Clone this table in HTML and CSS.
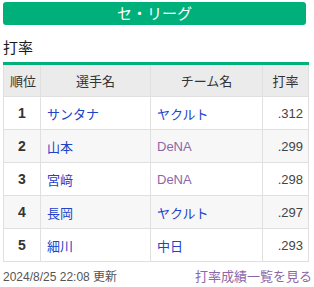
FILE: index.html
```html
<!DOCTYPE html>
<html lang="ja">
<head>
<meta charset="utf-8">
<link rel="stylesheet" href="styles.css">
</head>
<body>
<div class="wrap">
  <div class="league">セ・リーグ</div>
  <h2 class="title">打率</h2>
  <table class="rank">
    <colgroup>
      <col class="w-rank"><col class="w-name"><col class="w-team"><col class="w-avg">
    </colgroup>
    <thead>
      <tr><th>順位</th><th>選手名</th><th>チーム名</th><th>打率</th></tr>
    </thead>
    <tbody>
      <tr><td class="c-rank">1</td><td class="c-name"><a class="blue">サンタナ</a></td><td class="c-team"><a class="blue">ヤクルト</a></td><td class="c-avg">.312</td></tr>
      <tr><td class="c-rank">2</td><td class="c-name"><a class="blue">山本</a></td><td class="c-team"><a class="purple">DeNA</a></td><td class="c-avg">.299</td></tr>
      <tr><td class="c-rank">3</td><td class="c-name"><a class="blue">宮﨑</a></td><td class="c-team"><a class="purple">DeNA</a></td><td class="c-avg">.298</td></tr>
      <tr><td class="c-rank">4</td><td class="c-name"><a class="blue">長岡</a></td><td class="c-team"><a class="blue">ヤクルト</a></td><td class="c-avg">.297</td></tr>
      <tr><td class="c-rank">5</td><td class="c-name"><a class="blue">細川</a></td><td class="c-team"><a class="blue">中日</a></td><td class="c-avg">.293</td></tr>
    </tbody>
  </table>
  <div class="foot">
    <span class="updated">2024/8/25 22:08 更新</span>
    <a class="more">打率成績一覧を見る</a>
  </div>
</div>
</body>
</html>
```
FILE: styles.css
```css
html, body { margin: 0; padding: 0; background: #fff; }
body {
  font-family: "Liberation Sans", Arial, "Noto Sans CJK JP", sans-serif;
  color: #333;
}
.wrap { padding: 2px 0 0 3px; width: 305px; }
.league {
  background: #00b07b;
  color: #fff;
  border-radius: 3px;
  height: 23px;
  line-height: 23px;
  text-align: center;
  font-size: 15px;
  margin-right: 2px;
}
.title {
  font-size: 15px;
  font-weight: normal;
  color: #1a1a1a;
  margin: 14px 0 0 0;
  height: 23px;
  line-height: 17px;
}
.rank {
  width: 305px;
  table-layout: fixed;
  border-collapse: collapse;
  border-top: 3px solid #00b07b;
  font-size: 13px;
}
.w-rank { width: 37px; }
.w-name { width: 110px; }
.w-team { width: 112px; }
.w-avg { width: 46px; }
.rank th, .rank td {
  border: 1px solid #e0e0e0;
  padding: 0 6px;
  white-space: nowrap;
}
.rank th {
  height: 31px;
  background: #ebebeb;
  font-weight: normal;
  color: #333;
  text-align: center;
  border-top: none;
}
.rank td { height: 32px; }
.rank tbody tr:nth-child(even) td { background: #f7f7f7; }
.rank td.c-rank { text-align: center; font-weight: bold; color: #333; font-size: 14px; padding: 0; }
.rank td.c-name, .rank td.c-team { text-align: left; }
.rank td.c-avg { text-align: right; color: #444; padding-right: 5px; }
.blue { color: #2142c9; }
.purple { color: #8c66a8; }
.foot {
  display: flex;
  justify-content: space-between;
  align-items: center;
  margin-top: 4px;
  font-size: 12px;
}
.updated { color: #555; }
.more { color: #8c66a8; font-size: 13px; margin-right: -4px; }
```
